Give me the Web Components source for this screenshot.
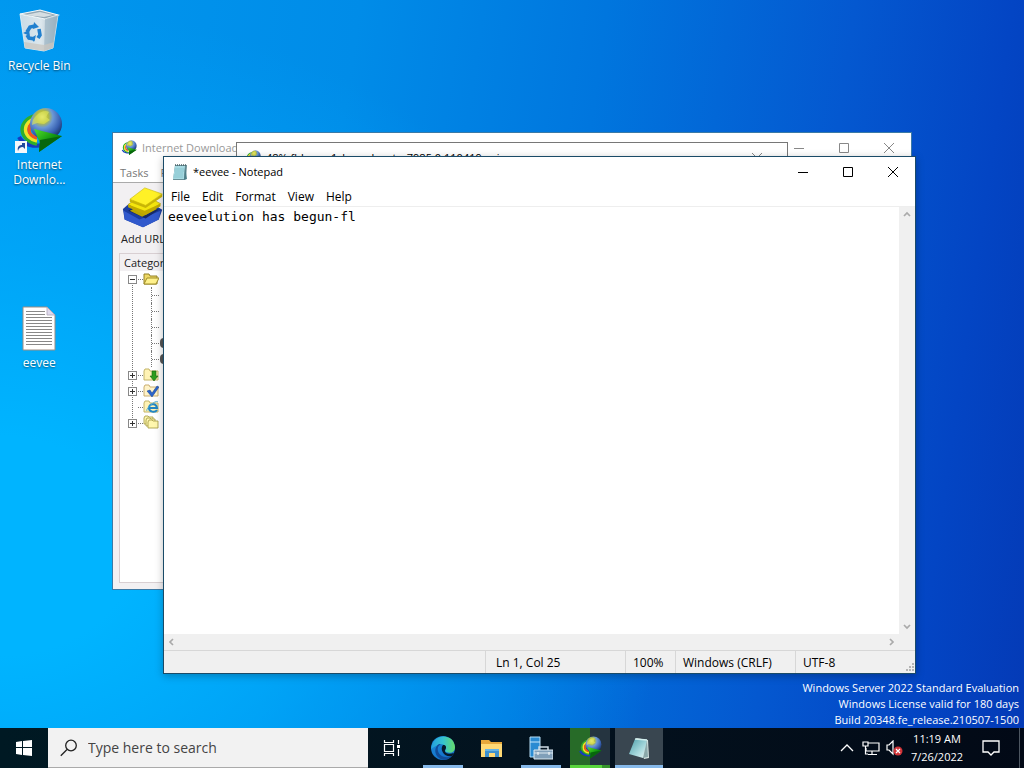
<!DOCTYPE html>
<html lang="en">
<head>
<meta charset="utf-8">
<title>Desktop</title>
<style>
    html, body {
        height: 100%;
        margin: 0;
    }

    body {
        font: 12px/16px "Open Sans", "Noto Sans", sans-serif;
        overflow: hidden;
    }
</style>
</head>
<body>
<desk-top>
    <desktop-icon icon="bin" style="grid-row: 1">Recycle Bin</desktop-icon>
    <desktop-icon icon="idm" shortcut style="grid-row: 2">Internet Downlo...</desktop-icon>
    <desktop-icon icon="text" style="grid-row: 4">eevee</desktop-icon>

    <app-window slot="windows" class="manager" icon="idm" label="Internet Download" inactive>
        <download-manager></download-manager>
    </app-window>
    <app-window slot="windows" class="progress" icon="idm" label="48% fbl_core1_kernel_opty_7985.0.110419-....iso" dialog></app-window>
    <app-window slot="windows" class="notepad" icon="notepad" label="*eevee - Notepad">
        <note-pad></note-pad>
    </app-window>

    <task-bar slot="taskbar"></task-bar>
</desk-top>

<script>
const icons = {
    bin: `<svg viewBox="5 0 48 48">
        <defs><linearGradient id="g" x2="1"><stop stop-color="#c9dbe6"/><stop offset=".55" stop-color="#dce7ed"/><stop offset="1" stop-color="#9fb5c4"/></linearGradient></defs>
        <path d="M10 6 30 2 48 7 36 11z" fill="#8195a1"/>
        <path d="M10 6 35 11 48 7 43 40 34 43 15 40z" fill="url(#g)" stroke="#edf5f8" stroke-width=".8"/>
        <path d="M10 6 30 2 48 7 35 11z" fill="#93a8b5" stroke="#f2f7f9" stroke-width="1.2"/>
        <path d="M15 7 30 4 43 7 34 9z" fill="#d6dee2"/>
        <path d="M35 11 48 7 43 40 34 43z" fill="#8fabbc" opacity=".55"/>
        <path d="m14 34 20 3 10-3-1 6-9 3-19-3z" fill="#c9c5bf" opacity=".75"/>
        <g fill="none" stroke="#2180cf" stroke-width="3.600"><path d="m17 24 3-5 5-1"/><path d="m29 21 1 6-2 3"/><path d="m25 31-6-1-2-3"/></g>
        <path d="m24 14 5 5-6 2zM26 27l-2 7-3-4zM13 25l6-3 1 6z" fill="#2180cf"/>
    </svg>`,
    idm: `<svg viewBox="0 0 48 48">
        <defs>
            <radialGradient id="g" cx=".38" cy=".28" r=".75"><stop stop-color="#f7f48a"/><stop offset=".25" stop-color="#b5bd3c"/><stop offset=".45" stop-color="#6b98d7"/><stop offset=".75" stop-color="#3861b2"/><stop offset="1" stop-color="#193263"/></radialGradient>
            <linearGradient id="a" x2="1" y2="1"><stop stop-color="#55e12b"/><stop offset=".5" stop-color="#129710"/><stop offset="1" stop-color="#04530b"/></linearGradient>
        </defs>
        <g fill="none" stroke-width="3.500">
            <path d="M4 30C8 38 20 41 31 37" stroke="#163cc0" stroke-width="4"/>
            <path d="M22 8A20 15 0 0 0 22 37" stroke="#2fae2c"/>
            <path d="M22 11A16 12 0 0 0 22 34" stroke="#f0e424"/>
            <path d="M22 14A12 9 0 0 0 22 31" stroke="#ef561f"/>
        </g>
        <circle cx="31" cy="17" r="16" fill="url(#g)"/>
        <path d="M22 8q7-6 12-3l-3 5 4 3-6 4-7-1-5 2q0-6 5-10" fill="#dce35a" opacity=".65"/>
        <path d="m19 22 28 7-23 16 1-9z" fill="url(#a)"/>
        <path d="m25 33 22-4-23 16z" fill="#07670c"/>
    </svg>`,
    text: `<svg viewBox="0 0 48 48">
        <path d="M8 2h24l8 8v35H8z" fill="#fff" stroke="#9d8d83"/>
        <path d="M32 2v8h8z" fill="#ded9ed" stroke="#ada4b7" stroke-width=".8"/>
        <path d="M11 6.500h19M11 9.500h19M11 12.500h26M11 15.500h26M11 18.500h26M11 21.500h26M11 24.500h26M11 27.500h26M11 30.500h26M11 33.500h26M11 36.500h26M11 39.500h26" stroke="#888"/>
    </svg>`,
    notepad: `<svg viewBox="0 0 16 16">
        <path d="M3 1h12l-1 14-2 1H1z" fill="#688e96"/>
        <path d="M3 2h10l-1 13H1z" fill="#a7dae2"/>
        <path d="M3 5h9M3 7h9M3 9h8M2 11h9M2 13h9" stroke="#72b6c3" stroke-width=".6"/>
        <path d="M3 1h11" stroke="#4a6267" stroke-width="1.4" stroke-dasharray="1 1"/>
        <path d="m13 3 2 12-3 1z" fill="#4c7f89"/>
    </svg>`,
    notebook: `<svg viewBox="0 0 24 24">
        <defs><linearGradient id="g" x2="1" y2="1"><stop stop-color="#4c9da9"/><stop offset=".6" stop-color="#a6d8dc"/><stop offset="1" stop-color="#eaf6f5"/></linearGradient></defs>
        <path d="m9 2 12 2 1 18-5 1z" fill="#d8e5e3"/>
        <path d="m8 3 12 1-4 18L2 18z" fill="url(#g)"/>
        <path d="m20 4-4 18 5-1z" fill="#8aa8aa"/>
        <path d="m8 3 12 1" stroke="#d1eeed" stroke-width="1.3"/>
    </svg>`,
    addurl: `<svg viewBox="0 0 48 48">
        <path d="m1 25 7-6 30 2 8 5-4 11-18 9L3 37z" fill="#1b3da0"/>
        <path d="m2 27 18 10 24-10-2 10-18 9L3 37z" fill="#3159cc"/>
        <path d="m7 27 12-8 23 7-15 10z" fill="#152966"/>
        <path d="m9 27 14-7 17 5-17 9z" fill="#b9a600"/>
        <path d="m7 20 17-12 20 11-18 12z" fill="#f4e50d" stroke="#b09c00" stroke-width=".7"/>
        <path d="m7 20 19 7 18-8v3L27 32 7 23z" fill="#c1aa00"/>
        <path d="m9 14 17-13 20 7-19 13z" fill="#fff126" stroke="#c9b900" stroke-width=".7"/>
        <path d="m9 14 18 7 19-13v3L27 24 9 17z" fill="#c8b507"/>
    </svg>`,
    windows: `<svg viewBox="0 0 16 16"><path d="m0 2 6-1v6H0zm7-1 9-1v7H7zM0 8h6v7l-6-1zm7 0h9v8l-9-1z" fill="#fff"/></svg>`,
    search: `<svg viewBox="0 0 18 18" fill="none" stroke="#222" stroke-width="1.3"><circle cx="11" cy="6.500" r="5.300"/><path d="M7 10.500.800 16.800"/></svg>`,
    taskview: `<svg viewBox="0 0 18 18" fill="none" stroke="#fff" stroke-width="1.2"><path d="M1.500 1v2.500h9V1M1.500 17v-2.500h9V17M1.500 5.500h9v7h-9zM15.500 1v4M15.500 10v7"/><path d="M14 6h3v3h-3z" fill="#fff" stroke="none"/></svg>`,
    edge: `<svg viewBox="0 0 24 24">
        <defs>
            <linearGradient id="g" x2="1"><stop stop-color="#259fdd"/><stop offset=".5" stop-color="#35c3d1"/><stop offset="1" stop-color="#66dc68"/></linearGradient>
            <linearGradient id="a" y2="1"><stop stop-color="#1b8bd8"/><stop offset="1" stop-color="#1268c4"/></linearGradient>
        </defs>
        <circle cx="12" cy="12" r="12" fill="url(#a)"/>
        <path d="M1 9C5-3 23-2 24 11c0 5-4 7-9 5-1-1-1-1 0-3 1-4-4-6-8-4-3 1-5 3-7 4z" fill="url(#g)"/>
        <path d="M12 8c-4 0-6 3-5 7 1 5 8 8 14 5-3 4-9 5-13 2-5-4-5-11 0-14z" fill="#114c98"/>
        <path d="M12 9c3 0 4 2 2 5-1 3 4 5 9 3l-2 3c-7 2-13-6-9-11" fill="#06182a"/>
    </svg>`,
    folder: `<svg viewBox="0 0 24 24"><path d="M1 4h8l2 2h11v15H1z" fill="#e7a83c"/><path d="M1 8h21v13H1z" fill="#ffd975"/><path d="M5 21v-8h14v8h-4v-4H9v4z" fill="#3e91cf"/><path d="M5 13h14v2H5z" fill="#66b4e5"/></svg>`,
    server: `<svg viewBox="0 0 24 24">
        <path d="M1 1h10v20H1z" fill="#2a8bd2" stroke="#b7dff7"/><path d="M1 6h10" stroke="#c7e7fb"/>
        <path d="M10 14v-3h9v3" fill="none" stroke="#d0dce5" stroke-width="1.500"/>
        <path d="M5 14h19v9H5z" fill="#809fb9" stroke="#dce9f1"/><path d="M5 17h19" stroke="#dce9f1"/><path d="M9 16v3M20 16v3" stroke="#fff"/>
    </svg>`,
    up: `<svg viewBox="0 0 16 16" fill="none" stroke="#fff" stroke-width="1.300"><path d="m2 11 6-6 6 6"/></svg>`,
    network: `<svg viewBox="0 0 18 16" fill="none" stroke="#fff" stroke-width="1.200"><path d="M6 3h11v8H4V8M10 11v3M6 14.500h9M1 2h5v4H1zM3.500 6v8H6"/></svg>`,
    volume: `<svg viewBox="0 0 18 16"><path d="M1 5h2l4-4v13l-4-4H1z" fill="none" stroke="#fff" stroke-width="1.200"/><circle cx="12" cy="11" r="4.500" fill="#d13438"/><path d="m10 9 4 4m0-4-4 4" stroke="#fff" stroke-width="1.200"/></svg>`,
    notice: `<svg viewBox="0 0 18 18" fill="none" stroke="#fff" stroke-width="1.300"><path d="M1 2h16v11h-5l-3 3-3-3H1z"/></svg>`,
    minimize: `<svg viewBox="0 0 10 10"><path d="M0 5.500h10" stroke="currentColor"/></svg>`,
    maximize: `<svg viewBox="0 0 10 10"><path d="M.5.500h9v9h-9z" fill="none" stroke="currentColor"/></svg>`,
    close: `<svg viewBox="0 0 10 10"><path d="m0 0 10 10m0-10L0 10" stroke="currentColor"/></svg>`,
    chevron: `<svg viewBox="0 0 10 10"><path d="m2 6 3-3 3 3" fill="none" stroke="#aaa" stroke-width="1.700"/></svg>`,
    shortcut: `<svg viewBox="0 0 12 12"><path d="M0 0h12v12H0z" fill="#f5f7fa"/><path d="M3 10c-1-4 1-6 4-6V2h3v6L8 6C5 6 4 7 3 10" fill="#234a9b"/></svg>`,
    open: `<svg viewBox="0 0 16 16"><path d="M1 13V3h5l1 2h7v8z" fill="#efd966" stroke="#938022"/><path d="m1 13 3-6h12l-3 6z" fill="#fff18b" stroke="#a08e29"/></svg>`,
    unfinished: `<svg viewBox="0 0 16 16"><path d="M1 13V4l1-2h4l1 2h8v9z" fill="#fff3b5" stroke="#c3b468"/><path d="M9 4h4v5h2l-4 5-4-5h2z" fill="#2d9d1c" stroke="#17650f" stroke-width=".6"/></svg>`,
    finished: `<svg viewBox="0 0 16 16"><path d="M1 13V4l1-2h4l1 2h8v9z" fill="#fff3c8" stroke="#c9ad70"/><path d="m4 8 3-1 2 3 5-7 2 1-7 10z" fill="#2c65ca" stroke="#153e91" stroke-width=".5"/></svg>`,
    grabber: `<svg viewBox="0 0 16 16"><path d="M1 13V4l1-2h4l1 2h8v9z" fill="#fff3b5" stroke="#c3b468"/><path d="M14 11c-2 3-8 2-8-2s7-6 8 0H7" fill="none" stroke="#2186c5" stroke-width="2"/><path d="M4 12c-2-2 9-12 11-9" fill="none" stroke="#52afd3"/></svg>`,
    queues: `<svg viewBox="0 0 16 16" fill="#fff7ae" stroke="#aaa04c" stroke-width=".9"><path d="M1 9V3l1-2h3l1 1h4v7z"/><path d="M3 11V5l1-2h3l1 1h4v7z"/><path d="M5 13V7l1-2h3l1 1h5v7z"/></svg>`
};

// Shared by every element: attaches an open root and fills it
class ShadowElement extends HTMLElement {
    constructor() {
        super();
        this.attachShadow({mode: 'open'}).innerHTML = this.render();
    }
}

class SysIcon extends ShadowElement {
    render() {
        return `
            <style>
                :host { display: block; flex: none; width: 16px; height: 16px; }
                svg { display: block; width: 100%; height: 100%; }
            </style>
            ${icons[this.getAttribute('name')] || ''}
        `;
    }
}

class DeskTop extends ShadowElement {
    render() {
        return `
            <style>
                :host {
                    display: flex;
                    flex-direction: column;
                    height: 100vh;
                    color: #fff;
                }

                main {
                    position: relative;
                    flex: 1;
                    min-height: 0;
                    background:
                        radial-gradient(ellipse 66% 75% at 0 75%, #00b4ff 20%, #00b0ff88 55%, transparent),
                        linear-gradient(98deg, #0098ef 0%, #008ce8 32%, #0076de 54%, #0458d0 76%, #0345c4 90%, #043ab6 100%);
                }

                .icons {
                    display: grid;
                    grid-template-rows: repeat(4, 99px);
                    width: 78px;
                    padding-top: 8px;
                }

                .edition {
                    position: absolute;
                    right: 5px;
                    bottom: 0;
                    margin: 0;
                    font-size: 11px;
                    text-align: right;
                }

                ::slotted(app-window) { position: absolute; }
                ::slotted(.manager) { inset: 132px 112px 138px 112px; }
                ::slotted(.progress) { inset: 142px 236px 300px 236px; }
                ::slotted(.notepad) { inset: 156px 108px 54px 163px; box-shadow: 0 2px 8px #0004; }
            </style>
            <main>
                <div class="icons"><slot></slot></div>
                <p class="edition">
                    Windows Server 2022 Standard Evaluation<br>
                    Windows License valid for 180 days<br>
                    Build 20348.fe_release.210507-1500
                </p>
                <slot name="windows"></slot>
            </main>
            <slot name="taskbar"></slot>
        `;
    }
}

class DesktopIcon extends ShadowElement {
    render() {
        return `
            <style>
                :host { display: block; }

                button {
                    display: flex;
                    flex-direction: column;
                    align-items: center;
                    gap: 2px;
                    width: 100%;
                    padding: 0 8px;
                    border: 0;
                    background: none;
                    color: inherit;
                    font: inherit;
                    line-height: 15px;
                }

                .picture { position: relative; }
                .picture sys-icon { width: 48px; height: 48px; }
                .picture .arrow { position: absolute; left: 0; bottom: 2px; width: 12px; height: 12px; }
                .label { text-shadow: 0 1px 2px #0008; white-space: normal; }
                :host(:not([shortcut])) .label { white-space: nowrap; }
            </style>
            <button type="button">
                <span class="picture">
                    <sys-icon name="${this.getAttribute('icon')}"></sys-icon>
                    ${this.hasAttribute('shortcut') ? '<sys-icon class="arrow" name="shortcut"></sys-icon>' : ''}
                </span>
                <span class="label"><slot></slot></span>
            </button>
        `;
    }
}

class AppWindow extends ShadowElement {
    render() {
        const controls = this.hasAttribute('dialog') ? ['close'] : ['minimize', 'maximize', 'close'];
        return `
            <style>
                :host {
                    display: flex;
                    flex-direction: column;
                    box-sizing: border-box;
                    border: 1px solid #1a4b68;
                    background: #fff;
                    color: #000;
                }

                :host([inactive]) { border-color: #3b7aa6; }
                :host([dialog]) { border-color: #777; }

                header {
                    display: flex;
                    align-items: center;
                    height: 30px;
                    padding-left: 8px;
                    gap: 5px;
                }

                h1 { flex: 1; margin: 0; font: inherit; font-size: 11px; white-space: nowrap; }
                :host([inactive]) h1 { color: #999; }
                :host([inactive]) button, :host([dialog]) button { color: #888; }

                .controls { display: flex; align-self: stretch; }
                :host([dialog]) .controls { padding-right: 8px; }

                button {
                    display: grid;
                    place-items: center;
                    width: 45px;
                    padding: 0;
                    border: 0;
                    background: none;
                    color: #000;
                }

                button sys-icon { width: 10px; height: 10px; }
                ::slotted(*) { flex: 1; min-height: 0; }
            </style>
            <header>
                <sys-icon name="${this.getAttribute('icon')}"></sys-icon>
                <h1>${this.getAttribute('label')}</h1>
                <div class="controls">
                    ${controls.map(name => `<button type="button" aria-label="${name}"><sys-icon name="${name}"></sys-icon></button>`).join('')}
                </div>
            </header>
            <slot></slot>
        `;
    }
}

class MenuBar extends ShadowElement {
    render() {
        return `
            <style>
                :host { display: flex; height: 19px; padding-left: 1px; }
                button { padding: 0 6px; border: 0; background: none; color: inherit; font: inherit; }
            </style>
            ${this.getAttribute('items').split(',').map(item => `<button type="button">${item}</button>`).join('')}
        `;
    }
}

class DownloadManager extends ShadowElement {
    render() {
        // One entry per row: toggle sign, folder icon
        const rows = [
            ['-', 'open'], ['sub'], ['sub'], ['sub'], ['sub', 'dark'], ['sub', 'dark'],
            ['+', 'unfinished'], ['+', 'finished'], ['', 'grabber'], ['+', 'queues']
        ];
        return `
            <style>
                :host { display: flex; flex-direction: column; background: #f2f0f2; font-size: 11px; }
                menu-bar { background: #fff; color: #777; border-bottom: 1px solid #aaa; }

                .toolbar { display: flex; height: 70px; padding: 0 8px; }

                .toolbar button {
                    display: flex;
                    flex-direction: column;
                    align-items: center;
                    gap: 2px;
                    padding: 4px 0 0;
                    border: 0;
                    background: none;
                    font: inherit;
                    color: #222;
                }

                .toolbar sys-icon { width: 44px; height: 42px; }

                .panel {
                    flex: 1;
                    display: flex;
                    flex-direction: column;
                    margin: 0 6px 6px;
                    border: 1px solid #d8cfd2;
                    color: #222;
                }

                h2 { margin: 0; padding-left: 4px; font: inherit; line-height: 17px; }
                ul { flex: 1; margin: 0; padding: 0 0 0 8px; background: #fff; list-style: none; }

                li {
                    display: grid;
                    grid-template-columns: 10px 5px 16px 1fr;
                    height: 16px;
                    align-items: center;
                    background: repeating-linear-gradient(#777 0 1px, #fff 1px 2px) 4px 0 / 1px 100% no-repeat;
                }

                li:first-child { background-size: 1px 8px; background-position: 4px 8px; }
                li:last-child { background-size: 1px 8px; }

                .sign {
                    display: grid;
                    place-items: center;
                    width: 7px;
                    height: 7px;
                    border: 1px solid #888;
                    background: linear-gradient(#333, #333) center / 5px 1px no-repeat #fff;
                }

                .plus {
                    background:
                        linear-gradient(#333, #333) center / 5px 1px no-repeat,
                        linear-gradient(#333, #333) center / 1px 5px no-repeat #fff;
                }

                .dots { height: 1px; background: repeating-linear-gradient(90deg, #777 0 1px, #fff 1px 2px); }
                .branch { grid-column: 3; align-self: stretch; display: flex; align-items: center; margin-left: 8px; border-left: 1px dotted #777; }
                .branch .dots { flex: 1; }
                .dark { width: 8px; height: 10px; margin-left: 1px; border-radius: 4px; background: #555; }
            </style>
            <menu-bar items="Tasks,File"></menu-bar>
            <div class="toolbar">
                <button type="button"><sys-icon name="addurl"></sys-icon>Add URL</button>
            </div>
            <section class="panel">
                <h2>Categories</h2>
                <ul>
                    ${rows.map(([sign, icon]) => sign === 'sub'
                        ? `<li><span class="branch"><span class="dots"></span></span>${icon ? '<span class="dark"></span>' : ''}</li>`
                        : `<li><span class="${sign ? 'sign' : ''} ${sign === '+' ? 'plus' : ''}"></span><span class="dots"></span><sys-icon name="${icon}"></sys-icon></li>`
                    ).join('')}
                </ul>
            </section>
        `;
    }
}

class NotePad extends ShadowElement {
    render() {
        return `
            <style>
                :host { display: flex; flex-direction: column; }

                .editor {
                    flex: 1;
                    display: grid;
                    grid-template: 1fr 16px / 1fr 16px;
                    border-top: 1px solid #eee;
                    background: #f0f0f0;
                }

                textarea {
                    padding: 2px 4px;
                    border: 0;
                    outline: 0;
                    resize: none;
                    overflow: hidden;
                    background: #fff;
                    color: #000;
                    font: 13px/16px "DejaVu Sans Mono", monospace;
                }

                .bar { display: flex; justify-content: space-between; align-items: center; }
                .bar button { display: grid; place-items: center; width: 16px; height: 16px; padding: 0; border: 0; background: none; }
                .bar sys-icon { width: 10px; height: 10px; }
                .vertical { flex-direction: column; }
                .down { rotate: 180deg; }
                .left { rotate: -90deg; }
                .right { rotate: 90deg; }

                footer {
                    display: grid;
                    grid-template-columns: 1fr 140px 50px 120px 120px;
                    height: 22px;
                    line-height: 24px;
                    border-top: 1px solid #d7d7d7;
                    background: #f0f0f0;
                }

                footer span { height: 22px; padding-left: 7px; border-left: 1px solid #d7d7d7; }
                footer span:first-child { border: 0; }
                footer .caret { padding-left: 10px; }
                footer .last { display: flex; justify-content: space-between; }
                .grip { align-self: flex-end; width: 9px; height: 9px; margin-bottom: 1px; fill: #b5b5b5; }
            </style>
            <menu-bar items="File,Edit,Format,View,Help"></menu-bar>
            <div class="editor">
                <textarea aria-label="Text editor" spellcheck="false">eeveelution has begun-fl</textarea>
                <div class="bar vertical">
                    <button type="button" aria-label="Scroll up"><sys-icon name="chevron"></sys-icon></button>
                    <button type="button" aria-label="Scroll down"><sys-icon class="down" name="chevron"></sys-icon></button>
                </div>
                <div class="bar">
                    <button type="button" aria-label="Scroll left"><sys-icon class="left" name="chevron"></sys-icon></button>
                    <button type="button" aria-label="Scroll right"><sys-icon class="right" name="chevron"></sys-icon></button>
                </div>
            </div>
            <footer>
                <span></span>
                <span class="caret">Ln 1, Col 25</span>
                <span>100%</span>
                <span>Windows (CRLF)</span>
                <span class="last">UTF-8
                    <svg class="grip" viewBox="0 0 9 9"><path d="M6 0h2v2H6zM3 3h2v2H3zM6 3h2v2H6zM0 6h2v2H0zM3 6h2v2H3zM6 6h2v2H6z"/></svg>
                </span>
            </footer>
        `;
    }
}

class TaskBar extends ShadowElement {
    render() {
        return `
            <style>
                :host {
                    display: flex;
                    flex: none;
                    height: 40px;
                    background: linear-gradient(90deg, #001923, #03131f 50%, #020916);
                    color: #fff;
                }

                button {
                    display: grid;
                    place-items: center;
                    width: 48px;
                    padding: 0;
                    border: 0;
                    background: none;
                    color: inherit;
                    font: inherit;
                }

                .search {
                    display: flex;
                    align-items: center;
                    gap: 10px;
                    flex: 0 1 320px;
                    box-sizing: border-box;
                    padding: 0 12px;
                    border-bottom: 1px solid #aaa;
                    background: #f2f2f2;
                }

                .search sys-icon { width: 18px; height: 18px; }

                input {
                    flex: 1;
                    min-width: 0;
                    padding: 0;
                    border: 0;
                    outline: 0;
                    background: none;
                    font: 14px/20px "Open Sans", "Noto Sans", sans-serif;
                }

                input::placeholder { color: #444; opacity: 1; }
                .view sys-icon { width: 18px; height: 18px; }

                .apps { display: flex; gap: 1px; padding-left: 3px; }
                .apps sys-icon { width: 24px; height: 24px; }
                .running { background: linear-gradient(#86b9ea, #86b9ea) bottom / 40px 3px no-repeat; }

                .loading {
                    background:
                        linear-gradient(90deg, #58d43c 32px, #36942c 32px) bottom / 40px 3px no-repeat,
                        linear-gradient(90deg, #276b28 20px, #253440 20px) center / 40px 100% no-repeat;
                }

                .active { background: linear-gradient(#86b9ea, #86b9ea) bottom / 100% 3px no-repeat #394650; }

                .tray { display: flex; margin-left: auto; }
                .tray .small { width: 24px; }
                .tray .network sys-icon, .tray .volume sys-icon { width: 18px; }
                .tray .clock { width: 60px; font-size: 11px; line-height: 18px; white-space: nowrap; }
                .notice sys-icon { width: 18px; height: 18px; }
                .edge { width: 5px; margin-left: 4px; border-left: 1px solid #4d5661; }
            </style>
            <button type="button" aria-label="Start"><sys-icon name="windows"></sys-icon></button>
            <label class="search">
                <sys-icon name="search"></sys-icon>
                <input type="text" aria-label="Search" placeholder="Type here to search">
            </label>
            <button type="button" class="view" aria-label="Task view"><sys-icon name="taskview"></sys-icon></button>
            <div class="apps">
                <button type="button" class="running" aria-label="Edge"><sys-icon name="edge"></sys-icon></button>
                <button type="button" aria-label="File Explorer"><sys-icon name="folder"></sys-icon></button>
                <button type="button" class="running" aria-label="Server Manager"><sys-icon name="server"></sys-icon></button>
                <button type="button" class="loading" aria-label="Internet Download Manager"><sys-icon name="idm"></sys-icon></button>
                <button type="button" class="active" aria-label="Notepad"><sys-icon name="notebook"></sys-icon></button>
            </div>
            <div class="tray">
                <button type="button" class="small" aria-label="Hidden icons"><sys-icon name="up"></sys-icon></button>
                <button type="button" class="small network" aria-label="Network"><sys-icon name="network"></sys-icon></button>
                <button type="button" class="small volume" aria-label="Volume"><sys-icon name="volume"></sys-icon></button>
                <button type="button" class="clock"><span>11:19 AM<br>7/26/2022</span></button>
                <button type="button" class="notice" aria-label="Notifications"><sys-icon name="notice"></sys-icon></button>
                <button type="button" class="edge" aria-label="Show desktop"></button>
            </div>
        `;
    }
}

customElements.define('sys-icon', SysIcon);
customElements.define('menu-bar', MenuBar);
customElements.define('desk-top', DeskTop);
customElements.define('desktop-icon', DesktopIcon);
customElements.define('app-window', AppWindow);
customElements.define('download-manager', DownloadManager);
customElements.define('note-pad', NotePad);
customElements.define('task-bar', TaskBar);
</script>
</body>
</html>
